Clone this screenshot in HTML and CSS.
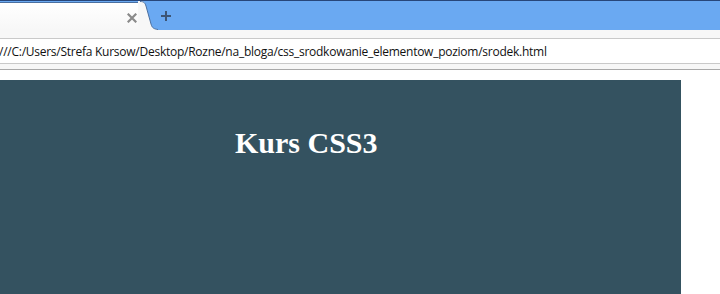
FILE: index.html
```html
<!DOCTYPE html>
<html>
<head>
<meta charset="utf-8">
<link rel="stylesheet" href="styles.css">
</head>
<body>
<div class="browser">
  <div class="tabstrip">
    <div class="tab">
      <span class="tab-close">
        <svg width="10" height="10" viewBox="0 0 10 10"><path d="M1.5 1.5 L8.5 8.5 M8.5 1.5 L1.5 8.5" stroke="#8a8a8a" stroke-width="2.2" stroke-linecap="square"/></svg>
      </span>
    </div>
    <svg class="tab-edge" width="20" height="29" viewBox="0 0 20 29"><path d="M0 0 L2 0 C6 0 7 2 8 5 L13 23 C14 27 16 28 20 28.5 L20 29 L0 29 Z" fill="#f7f7f7"/><path d="M2 0.5 C6 0.5 7 2 8 5 L13 23 C14 27 16 28 20 28.5" fill="none" stroke="#4a6fa0" stroke-width="1"/></svg>
    <span class="newtab">
      <svg width="12" height="12" viewBox="0 0 12 12"><path d="M6 1 V11 M1 6 H11" stroke="#3d5575" stroke-width="2"/></svg>
    </span>
  </div>
  <div class="toolbar">
    <div class="omnibox"><span class="url">///C:/Users/Strefa Kursow/Desktop/Rozne/na_bloga/css_srodkowanie_elementow_poziom/srodek.html</span></div>
  </div>
  <div class="page">
    <div class="hero">
      <h1 class="title">Kurs CSS3</h1>
    </div>
  </div>
</div>
</body>
</html>
```
FILE: styles.css
```css
html, body {
  margin: 0;
  padding: 0;
}
body {
  width: 720px;
  height: 294px;
  overflow: hidden;
  background: #ffffff;
}
.browser {
  display: flex;
  flex-direction: column;
  height: 294px;
}
.tabstrip {
  height: 29px;
  flex: none;
  background: #6aa9f2;
  border-top: 1px solid #27467a;
  display: flex;
  align-items: flex-end;
}
.tab {
  width: 138px;
  height: 28px;
  background: linear-gradient(#ffffff, #f7f7f7);
  border-top: 1px solid #4a6fa0;
  display: flex;
  align-items: center;
  justify-content: flex-end;
  box-sizing: border-box;
  padding-right: 1px;
}
.tab-close {
  display: flex;
  margin-top: 2px;
}
.tab-edge {
  display: block;
  flex: none;
}
.newtab {
  display: flex;
  margin-left: 2px;
  margin-bottom: 8px;
}
.toolbar {
  height: 40px;
  flex: none;
  background: #f7f7f7;
  border-bottom: 1px solid #a9a9a9;
  box-sizing: border-box;
  padding-top: 8px;
}
.omnibox {
  height: 26px;
  background: #ffffff;
  border-top: 1px solid #c9c9c9;
  border-bottom: 1px solid #c9c9c9;
  box-sizing: border-box;
  display: flex;
  align-items: center;
  overflow: hidden;
}
.url {
  font-family: "Open Sans", "DejaVu Sans", sans-serif;
  font-size: 12px;
  color: #111111;
  white-space: nowrap;
  margin-left: -1px;
  letter-spacing: -0.255px;
}
.page {
  flex: 1;
  background: #ffffff;
  padding-top: 10px;
  display: flex;
  flex-direction: column;
}
.hero {
  width: 681px;
  flex: 1;
  background: #345260;
  box-sizing: border-box;
  padding-top: 45px;
  padding-left: 235px;
}
.title {
  margin: 0;
  font-family: "Liberation Serif", "Times New Roman", serif;
  font-weight: bold;
  font-size: 30px;
  line-height: 36px;
  color: #ffffff;
}
```
